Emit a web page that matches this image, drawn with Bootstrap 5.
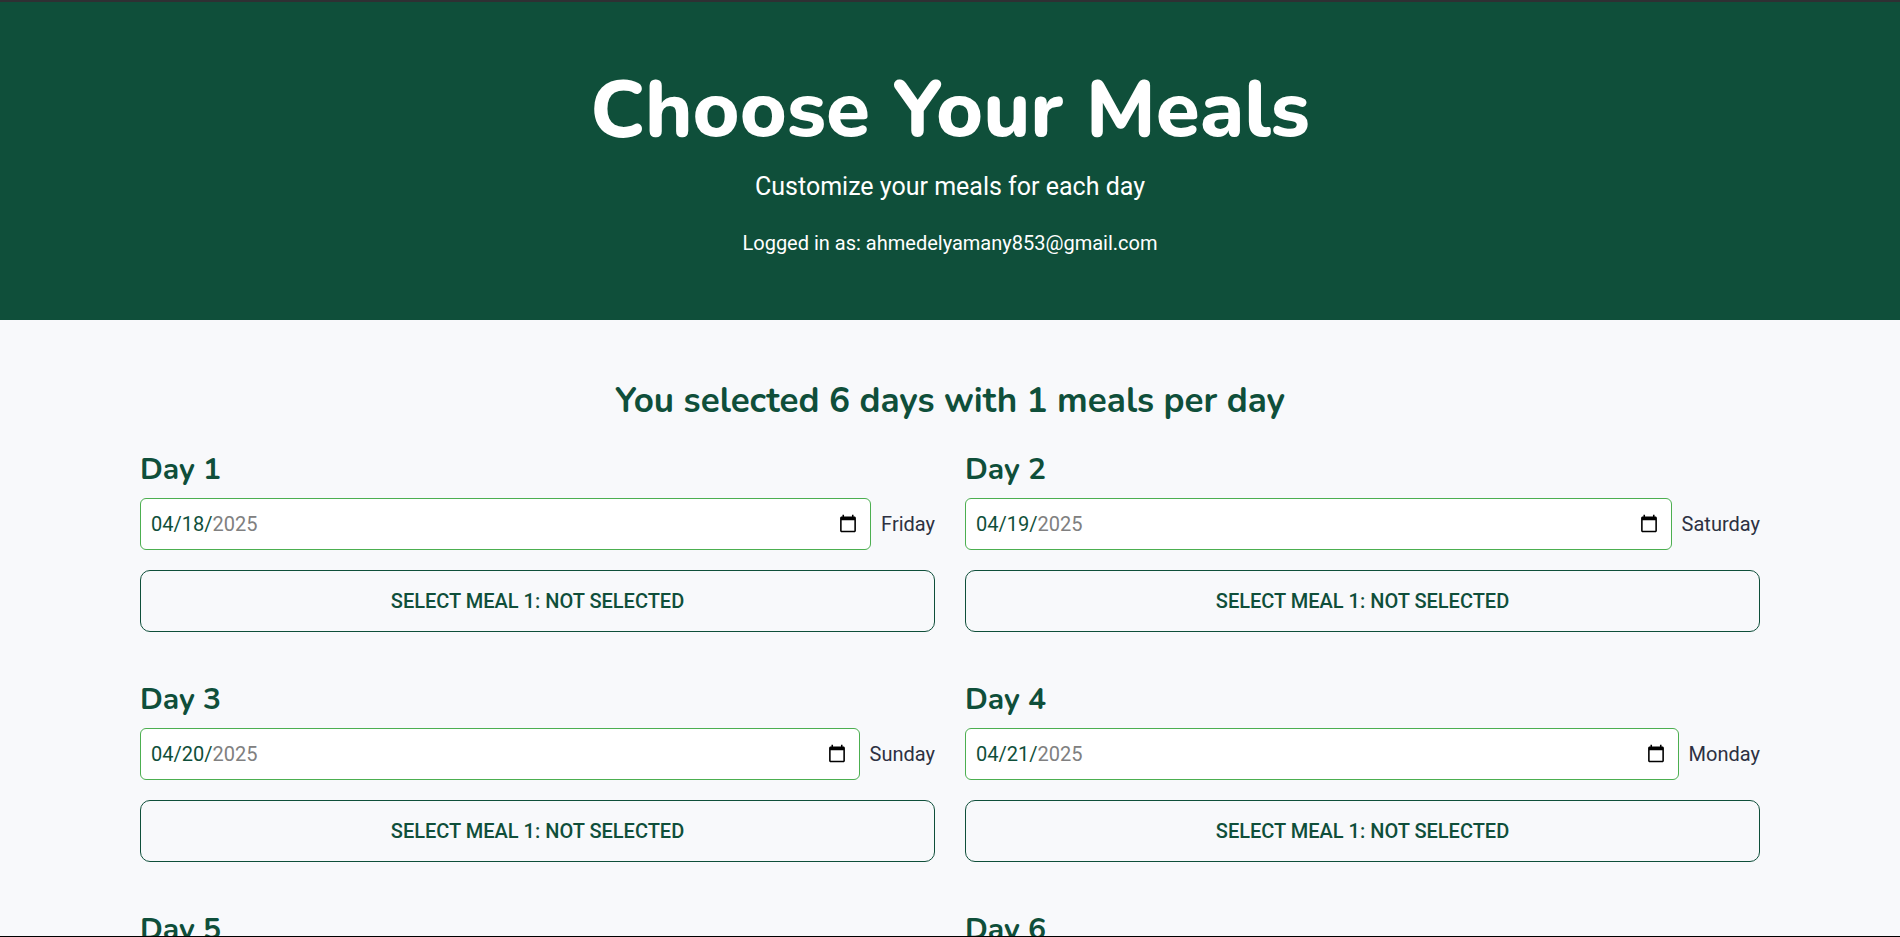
<!DOCTYPE html>
<html lang="en">
<head>
<meta charset="utf-8">
<meta name="viewport" content="width=device-width, initial-scale=1">
<title>Choose Your Meals</title>
<link href="https://cdn.jsdelivr.net/npm/bootstrap@5.3.0/dist/css/bootstrap.min.css" rel="stylesheet">
<style>
  :root { --brand: #0f4f3a; --accent: #4caf50; --title-font: Nunito, Lato, "Open Sans", sans-serif; }
  body { font: 400 20px/30px Roboto, sans-serif; color: #2d3142; background: #f8f9fb; border-top: 2px solid #2f3033; border-bottom: 1px solid #000; }
  h1, h2, h3 { font-family: var(--title-font); }
  .scroller { scrollbar-width: none; }
  .scroller::-webkit-scrollbar { display: none; }
  .hero { background: var(--brand); padding: 60px 16px 62px; }
  .hero h1 { font-size: 80px; line-height: 96px; font-weight: 800; margin-bottom: 10px; }
  .hero .tagline { font-size: 25px; line-height: 38px; margin-bottom: 22px; }
  .planner { max-width: 1650px; padding: 60px 15px; }
  .planner h2 { color: var(--brand); font-size: 35px; line-height: 42px; font-weight: 700; margin-bottom: 30px; }
  .planner h3 { color: var(--brand); font-size: 30px; line-height: 36px; font-weight: 700; margin-bottom: 10px; }
  .days { --bs-gutter-x: 30px; --bs-gutter-y: 50px; }
  .day-date { gap: 10px; margin-bottom: 20px; }
  .day-date .form-control { font-size: 20px; line-height: 30px; height: 52px; padding: 10px; color: var(--brand); border-color: var(--accent); border-radius: 6px; }
  .btn-meal { --bs-btn-color: var(--brand); --bs-btn-border-color: var(--brand); --bs-btn-hover-bg: var(--brand); --bs-btn-hover-color: #fff; --bs-btn-font-size: 20px; --bs-btn-font-weight: 500; --bs-btn-line-height: 30px; --bs-btn-padding-y: 15px; --bs-btn-border-radius: 10px; }
</style>
</head>
<body class="vh-100 d-flex flex-column">
<div class="scroller flex-grow-1 overflow-auto">
  <header class="hero text-center text-white">
    <h1>Choose Your Meals</h1>
    <p class="tagline">Customize your meals for each day</p>
    <p class="mb-0">Logged in as: ahmedelyamany853@gmail.com</p>
  </header>
  <main class="planner container-fluid">
    <h2 class="text-center">You selected 6 days with 1 meals per day</h2>
    <div class="row days mt-0">
      <section class="col-12 col-md-6 mt-0">
        <h3><label for="day1">Day 1</label></h3>
        <div class="day-date d-flex align-items-center"><input class="form-control" type="date" id="day1" value="2025-04-18" min="2025-04-18" max="2025-12-31"><span>Friday</span></div>
        <button type="button" class="btn btn-meal w-100 text-uppercase">Select Meal 1: Not Selected</button>
      </section>
      <section class="col-12 col-md-6 mt-md-0">
        <h3><label for="day2">Day 2</label></h3>
        <div class="day-date d-flex align-items-center"><input class="form-control" type="date" id="day2" value="2025-04-19" min="2025-04-18" max="2025-12-31"><span>Saturday</span></div>
        <button type="button" class="btn btn-meal w-100 text-uppercase">Select Meal 1: Not Selected</button>
      </section>
      <section class="col-12 col-md-6">
        <h3><label for="day3">Day 3</label></h3>
        <div class="day-date d-flex align-items-center"><input class="form-control" type="date" id="day3" value="2025-04-20" min="2025-04-18" max="2025-12-31"><span>Sunday</span></div>
        <button type="button" class="btn btn-meal w-100 text-uppercase">Select Meal 1: Not Selected</button>
      </section>
      <section class="col-12 col-md-6">
        <h3><label for="day4">Day 4</label></h3>
        <div class="day-date d-flex align-items-center"><input class="form-control" type="date" id="day4" value="2025-04-21" min="2025-04-18" max="2025-12-31"><span>Monday</span></div>
        <button type="button" class="btn btn-meal w-100 text-uppercase">Select Meal 1: Not Selected</button>
      </section>
      <section class="col-12 col-md-6">
        <h3><label for="day5">Day 5</label></h3>
        <div class="day-date d-flex align-items-center"><input class="form-control" type="date" id="day5" value="2025-04-22" min="2025-04-18" max="2025-12-31"><span>Tuesday</span></div>
        <button type="button" class="btn btn-meal w-100 text-uppercase">Select Meal 1: Not Selected</button>
      </section>
      <section class="col-12 col-md-6">
        <h3><label for="day6">Day 6</label></h3>
        <div class="day-date d-flex align-items-center"><input class="form-control" type="date" id="day6" value="2025-04-23" min="2025-04-18" max="2025-12-31"><span>Wednesday</span></div>
        <button type="button" class="btn btn-meal w-100 text-uppercase">Select Meal 1: Not Selected</button>
      </section>
    </div>
  </main>
</div>
<script src="https://cdn.jsdelivr.net/npm/bootstrap@5.3.0/dist/js/bootstrap.bundle.min.js"></script>
</body>
</html>
